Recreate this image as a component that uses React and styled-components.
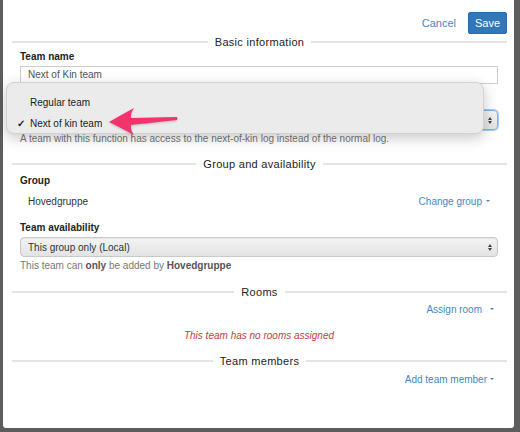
import React from "react";
import styled, { createGlobalStyle } from "styled-components";

const GlobalStyle = createGlobalStyle`
  html, body {
    margin: 0;
    padding: 0;
    background: #5d5d5d;
    font-family: "Liberation Sans", Arial, sans-serif;
  }
  * { box-sizing: border-box; }
`;

const Backdrop = styled.div`
  width: 520px;
  height: 432px;
  padding: 0 6px 4px 3px;
  overflow: hidden;
`;

const Modal = styled.div`
  position: relative;
  height: 428px;
  background: #fff;
  border-radius: 0 0 3px 3px;
  padding: 12px 7px 0 9px;
  color: #333;
  font-size: 10px;
`;

const Header = styled.div`
  display: flex;
  justify-content: flex-end;
  align-items: center;
  gap: 12px;
  height: 22px;
  margin-bottom: 1px;
`;

const LinkButton = styled.span`
  color: #3f87c9;
  font-size: 11px;
  line-height: 22px;
`;

const SaveButton = styled.span`
  display: inline-flex;
  align-items: center;
  justify-content: center;
  width: 39px;
  height: 22px;
  background: #3278b9;
  border: 1px solid #2a6aa6;
  border-radius: 2px;
  color: #fff;
  font-size: 11px;
`;

const Divider = styled.div`
  display: flex;
  align-items: center;
  height: 14px;
  margin-top: ${({ $top }) => $top || 0}px;
  font-size: 11px;
  letter-spacing: 0.3px;
  color: #222;

  &::before, &::after {
    content: "";
    flex: 1;
    height: 2px;
    background: #e4e4e4;
  }

  span {
    padding: 0 7px;
  }
`;

const Body = styled.div`
  padding: 0 9px 0 8px;
`;

const Group = styled.div`
  position: relative;
  margin-top: ${({ $top }) => $top || 0}px;
`;

const Label = styled.div`
  font-weight: bold;
  font-size: 10px;
  line-height: 14px;
  color: #222;
  visibility: ${({ $hidden }) => ($hidden ? "hidden" : "visible")};
`;

const TextInput = styled.div`
  height: 18px;
  margin-top: 2px;
  border: 1px solid #cfcfcf;
  padding: 0 7px;
  font-size: 10px;
  line-height: 16px;
  color: #555;
`;

const Select = styled.div`
  display: flex;
  align-items: center;
  justify-content: space-between;
  height: 20px;
  margin-top: 2px;
  padding: 0 5px 0 7px;
  border: 1px solid ${({ $focus }) => ($focus ? "#7ab4ec" : "#c9c9c9")};
  box-shadow: ${({ $focus }) =>
    $focus ? "0 0 0 1px #a8cff3" : "inset 0 1px 1px rgba(0,0,0,0.05)"};
  border-radius: 4px;
  background: linear-gradient(#f3f3f3, #e3e3e3);
  font-size: 10px;
  color: #333;
`;

const UpDown = styled.span`
  display: flex;
  flex-direction: column;
  gap: 1px;
  margin-left: auto;

  &::before, &::after {
    content: "";
    border-left: 2.5px solid transparent;
    border-right: 2.5px solid transparent;
  }
  &::before { border-bottom: 3px solid #444; }
  &::after { border-top: 3px solid #444; }
`;

const Help = styled.div`
  margin-top: 2px;
  line-height: 14px;
  color: #777;
  font-size: 10px;

  b { color: #555; }
`;

const Row = styled.div`
  display: flex;
  align-items: center;
  justify-content: space-between;
  height: 14px;
  margin-top: ${({ $top }) => $top || 0}px;
  padding-left: ${({ $indent }) => ($indent ? 8 : 0)}px;
  padding-right: ${({ $right }) => $right || 0}px;
`;

const Value = styled.span`
  color: #333;
`;

const Action = styled.span`
  display: inline-flex;
  align-items: center;
  gap: ${({ $gap }) => $gap || 4}px;
  margin-left: auto;
  color: #3f87c9;
  font-size: 10px;

  &::after {
    content: "";
    border-left: 2.5px solid transparent;
    border-right: 2.5px solid transparent;
    border-top: 2.5px solid #3f87c9;
  }
`;

const Empty = styled.div`
  margin-top: 13px;
  line-height: 14px;
  text-align: center;
  font-style: italic;
  color: #c33c3c;
`;

const Menu = styled.div`
  position: absolute;
  left: -14px;
  top: -12px;
  width: 478px;
  height: 52px;
  padding: 9px 0 0 0;
  background: #ebebeb;
  border: 1px solid #d2d2d2;
  border-radius: 8px;
  box-shadow: 0 4px 14px rgba(0, 0, 0, 0.22);
  z-index: 2;
`;

const MenuItem = styled.div`
  display: flex;
  align-items: center;
  height: 21px;
  font-size: 10px;
  color: #222;
`;

const Check = styled.span`
  width: 23px;
  padding-left: 10px;
  font-size: 10px;
  font-weight: bold;
`;

const Arrow = styled.svg`
  position: absolute;
  left: 99px;
  top: 24px;
  filter: drop-shadow(0 1px 1px rgba(0, 0, 0, 0.18));
`;

export default function App() {
  return (
    <>
      <GlobalStyle />
      <Backdrop>
        <Modal>
          <Header>
            <LinkButton>Cancel</LinkButton>
            <SaveButton>Save</SaveButton>
          </Header>

          <Divider><span>Basic information</span></Divider>
          <Body>
            <Group $top={1}>
              <Label>Team name</Label>
              <TextInput>Next of Kin team</TextInput>
            </Group>
            <Group $top={10}>
              <Label $hidden>Team function</Label>
              {/* the open menu covers the select's value */}
              <Select $focus>
                <UpDown />
              </Select>
              <Help>A team with this function has access to the next-of-kin log instead of the normal log.</Help>
              <Menu>
                <MenuItem><Check /><span>Regular team</span></MenuItem>
                <MenuItem><Check>✓</Check><span>Next of kin team</span></MenuItem>
                <Arrow width="74" height="30" viewBox="0 0 74 30">
                  <path
                    d="M3 15 Q15 8 28 1 Q24 7 25 11 L71 10 Q72 11.5 71 13 L25 18 Q24 22 28 28 Q15 21 3 15 Z"
                    fill="#f2336c"
                  />
                </Arrow>
              </Menu>
            </Group>
          </Body>

          <Divider $top={11}><span>Group and availability</span></Divider>
          <Body>
            <Group $top={3}>
              <Label>Group</Label>
              <Row $top={6} $indent $right={8}>
                <Value>Hovedgruppe</Value>
                <Action>Change group</Action>
              </Row>
            </Group>
            <Group $top={13}>
              <Label>Team availability</Label>
              <Select>
                <span>This group only (Local)</span>
                <UpDown />
              </Select>
              <Help>This team can <b>only</b> be added by <b>Hovedgruppe</b></Help>
            </Group>
          </Body>

          <Divider $top={12}><span>Rooms</span></Divider>
          <Body>
            <Row $top={3} $right={4}>
              <Action $gap={8}>Assign room</Action>
            </Row>
            <Empty>This team has no rooms assigned</Empty>
          </Body>

          <Divider $top={11}><span>Team members</span></Divider>
          <Body>
            <Row $top={4} $right={4}>
              <Action $gap={3}>Add team member</Action>
            </Row>
          </Body>
        </Modal>
      </Backdrop>
    </>
  );
}
